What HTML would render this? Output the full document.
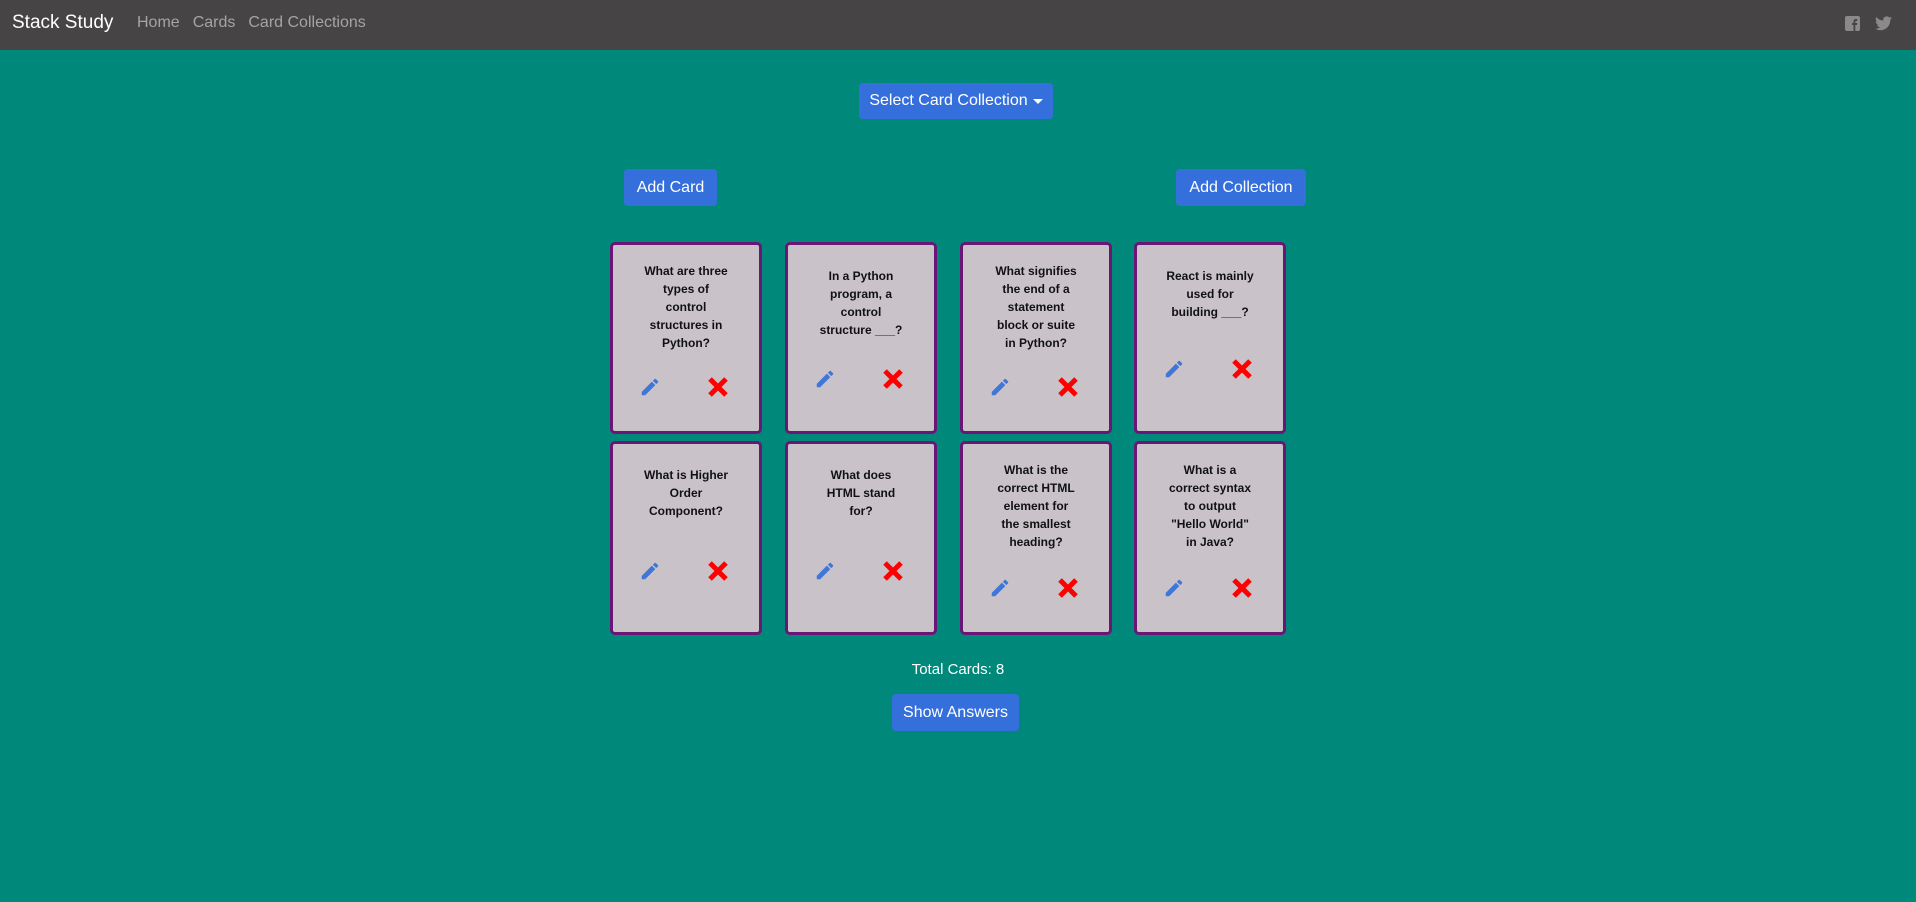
<!DOCTYPE html>
<html><head><meta charset="utf-8"><style>
*{box-sizing:border-box;margin:0;padding:0}
body{width:1916px;height:902px;background:#00897a;font-family:"Liberation Sans",sans-serif;position:relative;overflow:hidden}
nav{height:50px;background:#464445;position:relative}
.brand{position:absolute;left:12px;top:12px;color:#fff;font-size:19px}
.links{position:absolute;left:137px;top:14px;color:#a5a4a4;font-size:16px;word-spacing:0}
.links span{margin-right:13px}
.btn{position:absolute;background:#356fdc;color:#fff;font-size:16px;border-radius:4px;display:flex;align-items:center;justify-content:center}
.card{position:absolute;width:152px;background:#c9c3c9;border:3px solid #6a1677;border-radius:5px;text-align:center;padding-top:17px}
.q{font-size:12px;font-weight:bold;line-height:18px;color:#111}
.ic{position:absolute;left:-3px;width:152px;height:22px}
.ic svg{position:absolute;top:0}
.tc{position:absolute;top:661px;left:0;width:1916px;text-align:center;color:#fff;font-size:15px}
</style></head><body>
<nav><div class="brand">Stack Study</div><div class="links"><span>Home</span><span>Cards</span><span>Card Collections</span></div>
<svg style="position:absolute;left:1845px;top:16px" width="15" height="15" viewBox="0 0 15 15"><rect width="15" height="15" rx="2" fill="#8a8a8a"/><path d="M8.5 15V9H7V7h1.5V5.5c0-1.7 1-2.5 2.5-2.5h1.2v2H11c-.6 0-.7.3-.7.7V7h2l-.3 2h-1.7v6z" fill="#464445"/></svg>
<svg style="position:absolute;left:1875px;top:16px" width="17" height="15" viewBox="0 0 24 20"><path d="M24 2.4a10 10 0 0 1-2.8.8A5 5 0 0 0 23.3.4a10 10 0 0 1-3.1 1.2A4.9 4.9 0 0 0 11.8 6 14 14 0 0 1 1.7.9a4.9 4.9 0 0 0 1.5 6.6A4.9 4.9 0 0 1 1 6.9a4.9 4.9 0 0 0 3.9 4.8 5 5 0 0 1-2.2.1 4.9 4.9 0 0 0 4.6 3.4A9.9 9.9 0 0 1 0 17.3 14 14 0 0 0 7.5 19.5c9 0 14-7.5 14-14v-.6A10 10 0 0 0 24 2.4z" fill="#8a8a8a"/></svg>
</nav>
<div class="btn" style="left:859px;top:83px;width:194px;height:36px">Select Card Collection <span style="margin-left:5px;border-left:5px solid transparent;border-right:5px solid transparent;border-top:5px solid #fff;display:inline-block"></span></div>
<div class="btn" style="left:624px;top:169px;width:93px;height:37px">Add Card</div>
<div class="btn" style="left:1176px;top:169px;width:130px;height:37px">Add Collection</div>

<div class="card" style="left:610px;top:242px;height:192px"><div class="q">What are three<br>types of<br>control<br>structures in<br>Python?</div><div class="ic" style="top:131px"><svg style="left:29px" width="22" height="22" viewBox="0 0 24 24"><path d="M3 17.25V21h3.75L17.8 9.94l-3.75-3.75zM20.7 7.04a1 1 0 0 0 0-1.41l-2.34-2.34a1 1 0 0 0-1.41 0l-1.83 1.83 3.75 3.75z" fill="#3f76d8"/></svg><svg style="left:97px" width="22" height="22" viewBox="0 0 22 22"><path d="M3 3L19 19M19 3L3 19" stroke="#f00" stroke-width="5"/></svg></div></div>
<div class="card" style="left:785px;top:242px;height:192px"><div class="q" style="margin-top:5px">In a Python<br>program, a<br>control<br>structure ___?</div><div class="ic" style="top:123px"><svg style="left:29px" width="22" height="22" viewBox="0 0 24 24"><path d="M3 17.25V21h3.75L17.8 9.94l-3.75-3.75zM20.7 7.04a1 1 0 0 0 0-1.41l-2.34-2.34a1 1 0 0 0-1.41 0l-1.83 1.83 3.75 3.75z" fill="#3f76d8"/></svg><svg style="left:97px" width="22" height="22" viewBox="0 0 22 22"><path d="M3 3L19 19M19 3L3 19" stroke="#f00" stroke-width="5"/></svg></div></div>
<div class="card" style="left:960px;top:242px;height:192px"><div class="q">What signifies<br>the end of a<br>statement<br>block or suite<br>in Python?</div><div class="ic" style="top:131px"><svg style="left:29px" width="22" height="22" viewBox="0 0 24 24"><path d="M3 17.25V21h3.75L17.8 9.94l-3.75-3.75zM20.7 7.04a1 1 0 0 0 0-1.41l-2.34-2.34a1 1 0 0 0-1.41 0l-1.83 1.83 3.75 3.75z" fill="#3f76d8"/></svg><svg style="left:97px" width="22" height="22" viewBox="0 0 22 22"><path d="M3 3L19 19M19 3L3 19" stroke="#f00" stroke-width="5"/></svg></div></div>
<div class="card" style="left:1134px;top:242px;height:192px"><div class="q" style="margin-top:5px">React is mainly<br>used for<br>building ___?</div><div class="ic" style="top:113px"><svg style="left:29px" width="22" height="22" viewBox="0 0 24 24"><path d="M3 17.25V21h3.75L17.8 9.94l-3.75-3.75zM20.7 7.04a1 1 0 0 0 0-1.41l-2.34-2.34a1 1 0 0 0-1.41 0l-1.83 1.83 3.75 3.75z" fill="#3f76d8"/></svg><svg style="left:97px" width="22" height="22" viewBox="0 0 22 22"><path d="M3 3L19 19M19 3L3 19" stroke="#f00" stroke-width="5"/></svg></div></div>

<div class="card" style="left:610px;top:441px;height:194px"><div class="q" style="margin-top:5px">What is Higher<br>Order<br>Component?</div><div class="ic" style="top:116px"><svg style="left:29px" width="22" height="22" viewBox="0 0 24 24"><path d="M3 17.25V21h3.75L17.8 9.94l-3.75-3.75zM20.7 7.04a1 1 0 0 0 0-1.41l-2.34-2.34a1 1 0 0 0-1.41 0l-1.83 1.83 3.75 3.75z" fill="#3f76d8"/></svg><svg style="left:97px" width="22" height="22" viewBox="0 0 22 22"><path d="M3 3L19 19M19 3L3 19" stroke="#f00" stroke-width="5"/></svg></div></div>
<div class="card" style="left:785px;top:441px;height:194px"><div class="q" style="margin-top:5px">What does<br>HTML stand<br>for?</div><div class="ic" style="top:116px"><svg style="left:29px" width="22" height="22" viewBox="0 0 24 24"><path d="M3 17.25V21h3.75L17.8 9.94l-3.75-3.75zM20.7 7.04a1 1 0 0 0 0-1.41l-2.34-2.34a1 1 0 0 0-1.41 0l-1.83 1.83 3.75 3.75z" fill="#3f76d8"/></svg><svg style="left:97px" width="22" height="22" viewBox="0 0 22 22"><path d="M3 3L19 19M19 3L3 19" stroke="#f00" stroke-width="5"/></svg></div></div>
<div class="card" style="left:960px;top:441px;height:194px"><div class="q">What is the<br>correct HTML<br>element for<br>the smallest<br>heading?</div><div class="ic" style="top:133px"><svg style="left:29px" width="22" height="22" viewBox="0 0 24 24"><path d="M3 17.25V21h3.75L17.8 9.94l-3.75-3.75zM20.7 7.04a1 1 0 0 0 0-1.41l-2.34-2.34a1 1 0 0 0-1.41 0l-1.83 1.83 3.75 3.75z" fill="#3f76d8"/></svg><svg style="left:97px" width="22" height="22" viewBox="0 0 22 22"><path d="M3 3L19 19M19 3L3 19" stroke="#f00" stroke-width="5"/></svg></div></div>
<div class="card" style="left:1134px;top:441px;height:194px"><div class="q">What is a<br>correct syntax<br>to output<br>"Hello World"<br>in Java?</div><div class="ic" style="top:133px"><svg style="left:29px" width="22" height="22" viewBox="0 0 24 24"><path d="M3 17.25V21h3.75L17.8 9.94l-3.75-3.75zM20.7 7.04a1 1 0 0 0 0-1.41l-2.34-2.34a1 1 0 0 0-1.41 0l-1.83 1.83 3.75 3.75z" fill="#3f76d8"/></svg><svg style="left:97px" width="22" height="22" viewBox="0 0 22 22"><path d="M3 3L19 19M19 3L3 19" stroke="#f00" stroke-width="5"/></svg></div></div>

<div class="tc">Total Cards: 8</div>
<div class="btn" style="left:892px;top:694px;width:127px;height:37px">Show Answers</div>
</body></html>
